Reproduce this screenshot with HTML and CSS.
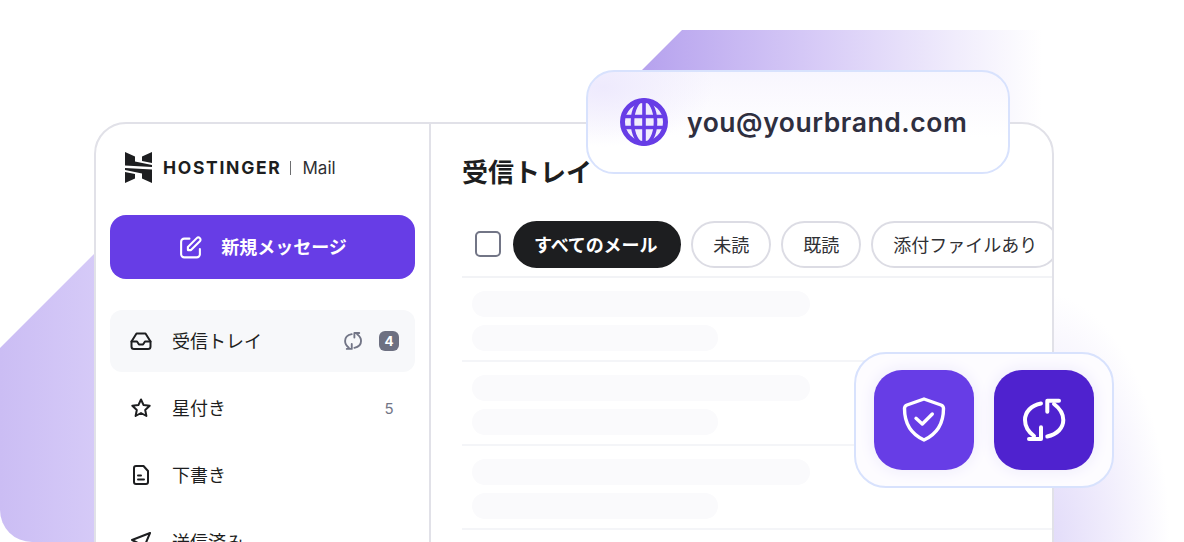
FILE: index.html
```html
<!DOCTYPE html>
<html lang="ja">
<head>
    <meta charset="UTF-8">
    <title>Hostinger Mail</title>
    <link rel="stylesheet" href="styles.css">
</head>
<body>
<div class="stage">
    <div class="shape-left"></div>
    <div class="shape-top"></div>
    <div class="shape-right"></div>

    <div class="window">
        <aside class="sidebar">
            <div class="brand">
                <svg class="brand-logo" viewBox="0 0 27 31" width="27" height="31">
                    <path fill="#1d1e20" d="M0 0L10 4.500V9.500L27 13V15L0 13.500zM17 4.500L27 0V11L17 9zM0 16L27 17.500V31L17 26.500V21.500L0 18zM10 26.500L0 31V20L10 22z"/>
                </svg>
                <span class="brand-name">HOSTINGER</span>
                <span class="brand-sep"></span>
                <span class="brand-app">Mail</span>
            </div>
            <button class="compose">
                <svg viewBox="0 0 24 24" width="25" height="25" fill="none" stroke="#fff" stroke-width="2" stroke-linecap="round" stroke-linejoin="round">
                    <path d="M11 3.500H6a3 3 0 0 0-3 3v12a3 3 0 0 0 3 3h12a3 3 0 0 0 3-3v-5"/>
                    <path d="M9.500 14.500v-3L18 3a2 2 0 0 1 3 3l-8.500 8.500z"/>
                </svg>
                <span class="compose-label">新規メッセージ</span>
            </button>
            <nav class="nav">
                <div class="nav-item active">
                    <svg class="nav-icon" viewBox="0 0 24 24" fill="none" stroke="#1d1e20" stroke-width="2" stroke-linejoin="round" stroke-linecap="round">
                        <path d="M7.500 4.500h9l5 8v5a2.500 2.500 0 0 1-2.500 2.500H5a2.500 2.500 0 0 1-2.500-2.500v-5z"/>
                        <path d="M2.500 12.500H8l2 3h4l2-3h5.500"/>
                    </svg>
                    <span class="nav-label">受信トレイ</span>
                    <svg class="nav-sync" viewBox="0 0 48 48" fill="none" stroke="#727586" stroke-width="4.500" stroke-linecap="round" stroke-linejoin="round">
                        <path d="M21 7.500C11 9.500 5 16 5 24C5 30 8 35.500 14 40"/>
                        <path d="M21 31.300V43H9"/>
                        <path d="M27.300 40.500C37 38.500 43.300 32 43.300 24C43.300 18 40 12.500 34 8"/>
                        <path d="M27.300 15.700V4.700H39"/>
                    </svg>
                    <span class="badge">4</span>
                </div>
                <div class="nav-item">
                    <svg class="nav-icon" viewBox="0 0 24 24" fill="none" stroke="#1d1e20" stroke-width="2" stroke-linejoin="round">
                        <path d="M12 3.500l2.600 5.600 6.100.7-4.500 4.200 1.200 6-5.400-3-5.400 3 1.200-6-4.500-4.200 6.100-.7z"/>
                    </svg>
                    <span class="nav-label">星付き</span>
                    <span class="count">5</span>
                </div>
                <div class="nav-item">
                    <svg class="nav-icon" viewBox="0 0 24 24" fill="none" stroke="#1d1e20" stroke-width="2" stroke-linejoin="round" stroke-linecap="round">
                        <path d="M7 3h7.500l4.500 5v11a2 2 0 0 1-2 2H7a2 2 0 0 1-2-2V5a2 2 0 0 1 2-2z"/>
                        <path d="M9 12.500h3M9 16.500h6"/>
                    </svg>
                    <span class="nav-label">下書き</span>
                </div>
                <div class="nav-item">
                    <svg class="nav-icon" viewBox="0 0 24 24" fill="none" stroke="#1d1e20" stroke-width="2" stroke-linejoin="round" stroke-linecap="round">
                        <path d="M21 3L3 10l7 3.500L13.500 21z"/>
                    </svg>
                    <span class="nav-label">送信済み</span>
                </div>
            </nav>
        </aside>
        <main class="content">
            <h1 class="title">受信トレイ</h1>
            <div class="filters">
                <span class="checkbox"></span>
                <span class="chip chip-on">すべてのメール</span>
                <span class="chip">未読</span>
                <span class="chip">既読</span>
                <span class="chip">添付ファイルあり</span>
            </div>
            <div class="row">
                <div class="bar bar-long"></div>
                <div class="bar bar-short"></div>
            </div>
            <div class="row">
                <div class="bar bar-long"></div>
                <div class="bar bar-short"></div>
            </div>
            <div class="row">
                <div class="bar bar-long"></div>
                <div class="bar bar-short"></div>
            </div>
        </main>
    </div>

    <div class="email-card">
        <svg class="globe" viewBox="0 0 48 48" width="48" height="48">
            <circle cx="24" cy="24" r="21.500" fill="#f1edfd" stroke="#673de6" stroke-width="5"/>
            <g fill="none" stroke="#673de6" stroke-width="3.600">
                <path d="M24 2v44M3 18.500h42M3 29.500h42"/>
                <ellipse cx="24" cy="24" rx="11.500" ry="22"/>
            </g>
        </svg>
        <span class="email-text">you@yourbrand.com</span>
    </div>

    <div class="tools-card">
        <div class="tool tool-light">
            <svg viewBox="0 0 48 48" width="48" height="48" fill="none" stroke="#fff" stroke-width="3.400" stroke-linecap="round" stroke-linejoin="round">
                <path d="M24 3L7 9C5 9.800 4.500 10.500 4.500 12.500C4.500 28 11 38 24 44C37 38 43.500 28 43.500 12.500C43.500 10.500 43 9.800 41 9z"/>
                <path d="M16 22.300L22.300 28L32.300 18"/>
            </svg>
        </div>
        <div class="tool tool-dark">
            <svg viewBox="0 0 48 48" width="48" height="48" fill="none" stroke="#fff" stroke-width="4" stroke-linecap="round" stroke-linejoin="round">
                <path d="M21 7.500C11 9.500 5 16 5 24C5 30 8 35.500 14 40"/>
                <path d="M21 31.300V43H9"/>
                <path d="M27.300 40.500C37 38.500 43.300 32 43.300 24C43.300 18 40 12.500 34 8"/>
                <path d="M27.300 15.700V4.700H39"/>
            </svg>
        </div>
    </div>
</div>
</body>
</html>
```

FILE: styles.css
```css
* {
    box-sizing: border-box;
}

body {
    margin: 0;
    background-color: #fff;
    color: #1d1e20;
    font-family: "Noto Sans CJK JP", "Noto Sans", sans-serif;
}

.stage {
    position: relative;
    width: 1184px;
    height: 542px;
    padding: 122px 0 0 94px;
    overflow: hidden;
}

/* background shapes */
.shape-left {
    position: absolute;
    left: 0;
    top: 250px;
    width: 110px;
    height: 292px;
    border-bottom-left-radius: 32px;
    background: linear-gradient(90deg, #cbbdf4, #d7ccf8);
    clip-path: polygon(0 98px, 98px 0, 100% 0, 100% 100%, 0 100%);
}

.shape-top {
    position: absolute;
    left: 642px;
    top: 30px;
    width: 400px;
    height: 100px;
    background: linear-gradient(90deg, #b6a2ee, #d8ccf7 45%, #f0ecfc 78%, #fff);
    clip-path: polygon(40px 0, 100% 0, 100% 100%, 0 100%, 0 40px);
}

.shape-right {
    position: absolute;
    left: 1040px;
    top: 220px;
    width: 144px;
    height: 322px;
    background: radial-gradient(130px 250px at 0 100%, #e0d9f9, #efebfc 50%, #fff);
}

/* main window */
.window {
    position: relative;
    display: flex;
    width: 960px;
    height: 480px;
    background-color: #fff;
    border: 2px solid #e1e1e8;
    border-radius: 32px;
}

.sidebar {
    flex: 0 0 334px;
    padding: 28px 14px 0 14px;
    border-right: 2px solid #e1e1e8;
}

.brand {
    display: flex;
    align-items: center;
    height: 31px;
    margin-left: 15px;
}

.brand-name {
    margin-left: 11px;
    font-family: "Inter", sans-serif;
    font-size: 17.500px;
    font-weight: 700;
    letter-spacing: 1.700px;
}

.brand-sep {
    width: 1px;
    height: 14px;
    margin: 0 12px 0 8px;
    background-color: #6d6e70;
}

.brand-app {
    font-family: "Inter", sans-serif;
    font-size: 17px;
    color: #2f3034;
}

.compose {
    display: flex;
    align-items: center;
    justify-content: center;
    gap: 18px;
    width: 305px;
    height: 64px;
    margin-top: 32px;
    border: none;
    border-radius: 16px;
    background-color: #673de6;
    color: #fff;
    font-family: inherit;
    font-size: 18px;
    font-weight: 600;
}

.compose-label {
    padding-bottom: 3px;
}

.nav {
    margin-top: 31px;
}

.nav-item {
    display: flex;
    align-items: center;
    width: 305px;
    height: 62px;
    margin-bottom: 5px;
    padding: 0 16px 0 19px;
    border-radius: 12px;
    font-size: 18px;
}

.nav-item.active {
    background-color: #f7f8fa;
}

.nav-icon {
    width: 24px;
    height: 24px;
}

.nav-label {
    flex: 1;
    margin-left: 19px;
    padding-bottom: 3px;
}

.nav-sync {
    width: 20px;
    height: 20px;
    margin-right: 16px;
}

.badge {
    width: 20px;
    height: 20px;
    border-radius: 6px;
    background-color: #6d7081;
    color: #fff;
    font-family: "Inter", sans-serif;
    font-size: 13.500px;
    font-weight: 700;
    line-height: 20px;
    text-align: center;
}

.count {
    width: 20px;
    color: #727586;
    font-family: "Inter", sans-serif;
    font-size: 15px;
    text-align: center;
}

/* mail list */
.content {
    flex: 1;
    min-width: 0;
    padding: 27px 0 0 31px;
    overflow: hidden;
    border-radius: 0 30px 0 0;
}

.title {
    margin: 0;
    font-size: 26px;
    font-weight: 700;
    line-height: 40px;
}

.filters {
    display: flex;
    align-items: center;
    height: 65px;
    margin-top: 22px;
    padding: 0 0 1px 13px;
    border-bottom: 2px solid #f2f3f6;
    white-space: nowrap;
}

.checkbox {
    flex: none;
    width: 26px;
    height: 26px;
    margin-right: 12px;
    border: 2.500px solid #727586;
    border-radius: 5px;
}

.chip {
    flex: none;
    height: 47px;
    margin-right: 10px;
    padding: 0 20px;
    border: 2px solid #dcdce4;
    border-radius: 24px;
    font-size: 18px;
    line-height: 43px;
    color: #2f3034;
}

.chip-on {
    padding: 0 22px 0 19px;
    border-color: #1d1e20;
    background-color: #1d1e20;
    color: #fff;
    font-weight: 700;
    letter-spacing: -0.100px;
}

.row {
    height: 84px;
    padding: 13px 0 0 10px;
    border-bottom: 2px solid #f4f5f8;
}

.bar {
    height: 26px;
    border-radius: 13px;
    background-color: #fafafc;
}

.bar-long {
    width: 338px;
    margin-bottom: 8px;
}

.bar-short {
    width: 246px;
}

/* floating cards */
.email-card {
    position: absolute;
    left: 586px;
    top: 70px;
    display: flex;
    align-items: center;
    width: 424px;
    height: 104px;
    padding-left: 32px;
    border: 2px solid #d8e2fd;
    border-radius: 28px;
    background: radial-gradient(110px 60px at 15px 15px, #eeeafd, transparent), linear-gradient(180deg, #f8f6fe, #fff 65%);
}

.globe {
    flex: none;
}

.email-text {
    margin-left: 19px;
    font-family: "Inter", sans-serif;
    font-size: 26.500px;
    font-weight: 600;
    letter-spacing: 0.550px;
    color: #2f2f3f;
}

.tools-card {
    position: absolute;
    left: 854px;
    top: 352px;
    display: flex;
    gap: 20px;
    width: 260px;
    height: 136px;
    padding: 16px 18px;
    border: 2px solid #d8e2fd;
    border-radius: 32px;
    background-color: #fdfcff;
}

.tool {
    display: flex;
    align-items: center;
    justify-content: center;
    width: 100px;
    height: 100px;
    border-radius: 28px;
    box-shadow: 0 0 16px #ece8fb;
}

.tool-light {
    background-color: #673de6;
}

.tool-dark {
    background-color: #4f22cf;
}
```
